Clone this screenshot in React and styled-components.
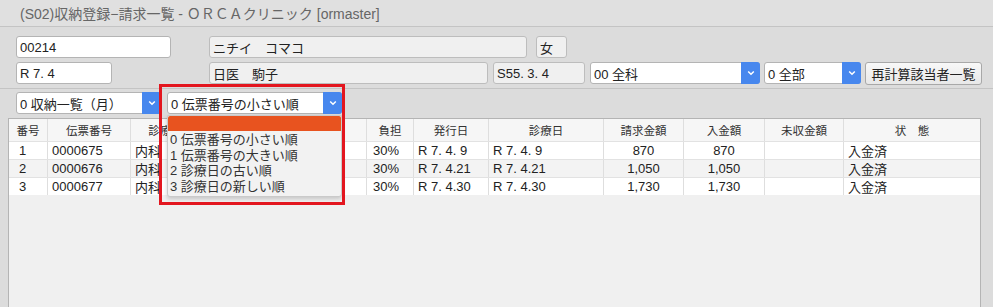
import styled, { createGlobalStyle } from "styled-components";

const GlobalStyle = createGlobalStyle`
  html, body {
    margin: 0;
    padding: 0;
    background: #dcdcdc;
  }
  body {
    font-family: "Liberation Sans", "Noto Sans CJK JP", sans-serif;
    color: #222;
  }
`;

const Window = styled.div`
  width: 993px;
  height: 307px;
  overflow: hidden;
  background: #dcdcdc;
`;

const TitleBar = styled.div`
  height: 26px;
  display: flex;
  align-items: center;
  padding-left: 20px;
  background: #e0e0e0;
  border-bottom: 1px solid #c4c4c4;
  color: #666;
  font-size: 14px;
  white-space: nowrap;
`;

const Form = styled.div`
  padding: 9px 0 0 16px;
  display: flex;
  flex-direction: column;
  gap: 4px;
`;

const Row = styled.div`
  display: flex;
  align-items: center;
  height: 22px;
`;

const Field = styled.div`
  box-sizing: border-box;
  width: ${(p) => p.$w}px;
  height: 22px;
  margin-left: ${(p) => p.$ml || 0}px;
  padding-left: 3px;
  display: flex;
  align-items: center;
  font-size: 13px;
  white-space: nowrap;
  background: ${(p) => (p.$ro ? "#f0f0f0" : "#fff")};
  border: 1px solid ${(p) => (p.$ro ? "#bdbdbd" : "#b4b4b4")};
  border-radius: 3px;
  color: #222;
`;

const SelectBox = styled.div`
  position: relative;
  box-sizing: border-box;
  width: ${(p) => p.$w}px;
  height: 22px;
  margin-left: ${(p) => p.$ml || 0}px;
  display: flex;
  background: #fff;
  border: 1px solid #b4b4b4;
  border-radius: 3px;
  font-size: 13px;
`;

const SelectText = styled.div`
  flex: 1;
  display: flex;
  align-items: center;
  padding-left: 3px;
  white-space: nowrap;
  overflow: hidden;
`;

const Arrow = styled.div`
  width: 19px;
  margin: -1px -1px -1px 0;
  display: flex;
  align-items: center;
  justify-content: center;
  background: #4787ee;
  border-radius: 0 3px 3px 0;
`;

const Button = styled.div`
  box-sizing: border-box;
  width: ${(p) => p.$w}px;
  height: 23px;
  margin-left: ${(p) => p.$ml || 0}px;
  display: flex;
  align-items: center;
  justify-content: center;
  font-size: 13px;
  background: linear-gradient(#f8f8f8, #e8e8e8);
  border: 1px solid #a8a8a8;
  border-radius: 3px;
  white-space: nowrap;
`;

const Divider = styled.div`
  height: 1px;
  margin-top: 4px;
  background: #c4c4c4;
`;

const ToolRow = styled(Row)`
  margin: 3px 0 0 16px;
`;

const Highlight = styled.div`
  position: absolute;
  left: -9px;
  top: -9px;
  width: 186px;
  height: 121px;
  box-sizing: border-box;
  border: 3px solid #e3161f;
  pointer-events: none;
  z-index: 3;
`;

const DropList = styled.div`
  position: absolute;
  left: -1px;
  top: 22px;
  width: 175px;
  box-sizing: border-box;
  background: #f2f2f2;
  border: 1px solid #cacaca;
  border-radius: 0 0 3px 3px;
  box-shadow: 0 2px 4px rgba(0, 0, 0, 0.18);
  padding-bottom: 2px;
  z-index: 2;
`;

const DropHead = styled.div`
  height: 15px;
  margin-bottom: 1px;
  background: #e8531f;
  border-radius: 2px 2px 0 0;
`;

const DropItem = styled.div`
  height: 15.5px;
  display: flex;
  align-items: center;
  padding-left: 2px;
  font-size: 13px;
  line-height: 1;
  color: #333;
  white-space: nowrap;
`;

const Table = styled.div`
  margin: 4px 0 0 8px;
  width: 973px;
  height: 200px;
  box-sizing: border-box;
  background: #f0f0f0;
  border: 1px solid #b4b4b4;
`;

const cols = "38px 83px 70px 166px 47px 75px 115px 80px 81px 79px 137px";

const HeadRow = styled.div`
  display: grid;
  grid-template-columns: ${cols};
  height: 22px;
  background: #f6f6f6;
`;

const HeadCell = styled.div`
  display: flex;
  align-items: center;
  justify-content: center;
  font-size: 11.5px;
  color: #333;
  border-left: ${(p) => (p.$first ? "none" : "1px solid #dedede")};
  white-space: nowrap;
`;

const BodyRow = styled.div`
  display: grid;
  grid-template-columns: ${cols};
  height: 18px;
  background: ${(p) => (p.$alt ? "#f3f3f3" : "#fff")};
  border-top: 1px solid #e2e2e2;
  box-sizing: border-box;
`;

const Cell = styled.div`
  display: flex;
  align-items: center;
  justify-content: ${(p) => (p.$center ? "center" : "flex-start")};
  padding-left: ${(p) => (p.$center ? 0 : p.$pad ?? 4)}px;
  font-size: 13px;
  color: #222;
  border-left: ${(p) => (p.$first ? "none" : "1px solid #dedede")};
  white-space: nowrap;
  overflow: hidden;
`;

const Chevron = () => (
  <svg width="8" height="6" viewBox="0 0 8 6">
    <polyline points="1.2,1.5 4,4.3 6.8,1.5" fill="none" stroke="#fff" strokeWidth="1.5" />
  </svg>
);

const Select = ({ w, ml, children, open }) => (
  <SelectBox $w={w} $ml={ml}>
    <SelectText>{children}</SelectText>
    <Arrow>
      <Chevron />
    </Arrow>
    {open}
  </SelectBox>
);

const headers = ["番号", "伝票番号", "診療科", "", "負担", "発行日", "診療日", "請求金額", "入金額", "未収金額", "状　態"];

const rows = [
  ["1", "0000675", "内科", "", "30%", "R 7. 4. 9", "R 7. 4. 9", "870", "870", "", "入金済"],
  ["2", "0000676", "内科", "", "30%", "R 7. 4.21", "R 7. 4.21", "1,050", "1,050", "", "入金済"],
  ["3", "0000677", "内科", "", "30%", "R 7. 4.30", "R 7. 4.30", "1,730", "1,730", "", "入金済"],
];

const sortOptions = ["0 伝票番号の小さい順", "1 伝票番号の大きい順", "2 診療日の古い順", "3 診療日の新しい順"];

export default function App() {
  return (
    <>
      <GlobalStyle />
      <Window>
        <TitleBar>(S02)収納登録−請求一覧 - ＯＲＣＡクリニック [ormaster]</TitleBar>
        <Form>
          <Row>
            <Field $w={155}>00214</Field>
            <Field $w={318} $ml={38} $ro>ニチイ　コマコ</Field>
            <Field $w={31} $ml={9} $ro>女</Field>
          </Row>
          <Row>
            <Field $w={96}>R 7. 4</Field>
            <Field $w={279} $ml={97} $ro>日医　駒子</Field>
            <Field $w={92} $ml={5} $ro>S55. 3. 4</Field>
            <Select w={170} ml={5}>00 全科</Select>
            <Select w={97} ml={4}>0 全部</Select>
            <Button $w={117} $ml={4}>再計算該当者一覧</Button>
          </Row>
        </Form>
        <Divider />
        <ToolRow>
          <Select w={145}>0 収納一覧（月）</Select>
          <Select
            w={175}
            ml={6}
            open={
              <>
                <Highlight />
                <DropList>
                  <DropHead />
                  {sortOptions.map((o) => (
                    <DropItem key={o}>{o}</DropItem>
                  ))}
                </DropList>
              </>
            }
          >
            0 伝票番号の小さい順
          </Select>
        </ToolRow>
        <Table>
          <HeadRow>
            {headers.map((h, i) => (
              <HeadCell key={i} $first={i === 0}>
                {h}
              </HeadCell>
            ))}
          </HeadRow>
          {rows.map((r, ri) => (
            <BodyRow key={ri} $alt={ri === 1}>
              {r.map((c, i) => (
                <Cell
                  key={i}
                  $first={i === 0}
                  $center={i === 7 || i === 8}
                  $pad={i === 0 ? 10 : i === 4 ? 6 : 4}
                >
                  {c}
                </Cell>
              ))}
            </BodyRow>
          ))}
        </Table>
      </Window>
    </>
  );
}
